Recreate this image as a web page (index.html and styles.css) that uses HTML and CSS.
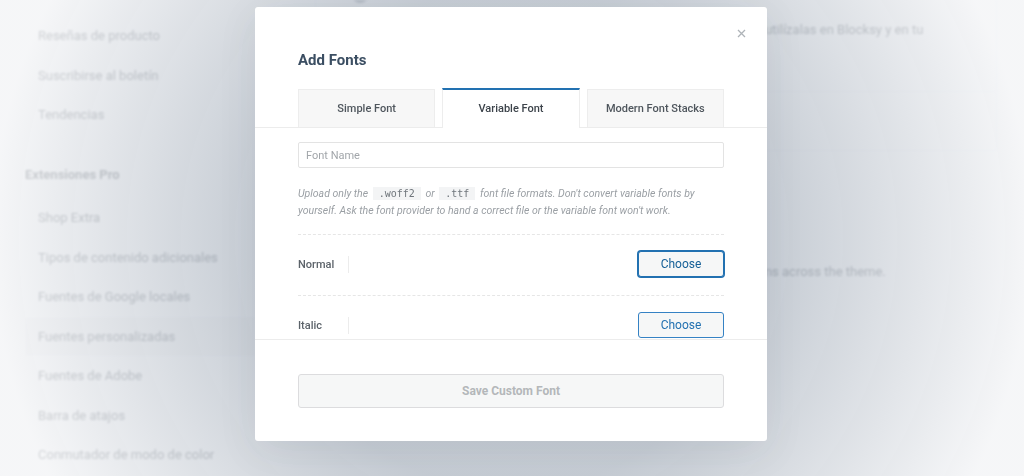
FILE: index.html
```html
<!DOCTYPE html>
<html lang="es">
<head>
  <meta charset="UTF-8">
  <meta name="viewport" content="width=device-width, initial-scale=1.0">
  <title>Fuentes personalizadas</title>
  <link rel="stylesheet" href="styles.css">
</head>
<body>
  <div class="admin">
    <aside class="sidebar">
      <ul class="menu">
        <li>Reseñas de producto</li>
        <li>Suscribirse al boletín</li>
        <li>Tendencias</li>
      </ul>
      <h3 class="menu-title">Extensiones Pro</h3>
      <ul class="menu">
        <li>Shop Extra</li>
        <li>Tipos de contenido adicionales</li>
        <li>Fuentes de Google locales</li>
        <li class="current">Fuentes personalizadas</li>
        <li>Fuentes de Adobe</li>
        <li>Barra de atajos</li>
        <li>Conmutador de modo de color</li>
      </ul>
    </aside>

    <main class="content">
      <div class="ext-card">
        <div class="ext-row">
          <span class="ext-icon"></span>
          <p>Sube tus propias fuentes personalizadas desde tu propio equipo y utilízalas en Blocksy y en tu</p>
        </div>
        <div class="ext-row small"></div>
      </div>
      <p class="content-note">Once uploaded, the fonts are available in all of the typography options across the theme.</p>
    </main>
  </div>

  <div class="overlay"></div>

  <div class="modal">
    <button class="modal-close" type="button">
      <svg width="9" height="9" viewBox="0 0 9 9"><path d="M1 1L8 8M8 1L1 8" stroke="#aeb3b8" stroke-width="1.3"/></svg>
    </button>

    <div class="modal-head">
      <h2>Add Fonts</h2>
      <div class="tabs">
        <div class="tab">Simple Font</div>
        <div class="tab active">Variable Font</div>
        <div class="tab">Modern Font Stacks</div>
      </div>
    </div>

    <div class="modal-body">
      <input class="font-name" type="text" placeholder="Font Name">

      <p class="help">Upload only the <code>.woff2</code> or <code>.ttf</code> font file formats. Don't convert variable fonts by yourself. Ask the font provider to hand a correct file or the variable font won't work.</p>

      <div class="variation">
        <span class="variation-label">Normal</span>
        <button class="choose focused" type="button">Choose</button>
      </div>
      <div class="variation">
        <span class="variation-label">Italic</span>
        <button class="choose" type="button">Choose</button>
      </div>
    </div>

    <div class="modal-foot">
      <button class="save" type="button">Save Custom Font</button>
    </div>
  </div>
</body>
</html>
```

FILE: styles.css
```css
* {
  box-sizing: border-box;
}

body {
  margin: 0;
  height: 476px;
  overflow: hidden;
  background-color: #f0f0f1;
  font-family: Roboto, "Liberation Sans", sans-serif;
}

/* blurred admin page behind the modal */
.admin {
  display: flex;
  height: 100%;
  color: #3c434a;
  filter: blur(0.8px);
}

.sidebar {
  width: 255px;
  flex-shrink: 0;
  padding: 16px 0 0 25px;
}

.menu {
  list-style: none;
  margin: 0;
  padding: 0;
}

.menu li {
  height: 39.5px;
  line-height: 39.5px;
  padding-left: 13px;
  font-size: 13px;
}

.menu li.current {
  background-color: rgba(0, 0, 0, 0.04);
}

.menu-title {
  margin: 20px 0 4px;
  height: 39.5px;
  line-height: 39.5px;
  font-size: 13px;
  font-weight: 700;
}

.content {
  flex: 1;
  padding-left: 60px;
}

.ext-card {
  width: 682px;
  border: 1px solid #e2e4e7;
  border-top: 0;
}

.ext-row {
  height: 91px;
  padding: 0 35px;
  overflow: hidden;
}

.ext-row.small {
  height: 59px;
  border-top: 1px solid #e2e4e7;
}

.ext-icon {
  display: block;
  width: 18px;
  height: 18px;
  margin-top: -15px;
  border-radius: 50%;
  background-color: #7d848b;
}

.ext-row p {
  margin: 17px 0 0 31px;
  font-size: 13px;
  line-height: 20px;
  white-space: nowrap;
}

.content-note {
  margin: 111px 0 0 63px;
  font-size: 13px;
  line-height: 20px;
  white-space: nowrap;
}

.overlay {
  position: fixed;
  top: 0;
  left: 0;
  right: 0;
  bottom: 0;
  background: radial-gradient(circle at 50% 50%, rgba(185, 193, 203, 0.78) 0, rgba(185, 193, 203, 0.78) 250px, rgba(247, 248, 250, 0.8) 520px);
}

/* modal */
.modal {
  position: fixed;
  top: 7px;
  left: 255px;
  width: 512px;
  height: 434px;
  display: flex;
  flex-direction: column;
  background-color: #fff;
  border-radius: 3px;
  box-shadow: 0 10px 40px rgba(40, 50, 60, 0.08);
}

.modal-close {
  position: absolute;
  top: 19px;
  right: 19px;
  width: 14px;
  height: 14px;
  padding: 0;
  border: 0;
  background: none;
  display: flex;
  align-items: center;
  justify-content: center;
  cursor: pointer;
}

.modal-head {
  padding-top: 43px;
  border-bottom: 1px solid #ececec;
}

.modal-head h2 {
  margin: 0 43px 19px;
  font-size: 15px;
  line-height: 20px;
  font-weight: 700;
  color: #3b4e62;
}

.tabs {
  display: flex;
  gap: 7px;
  padding: 0 43px;
  margin-bottom: -1px;
}

.tab {
  flex: 1;
  height: 38px;
  line-height: 37px;
  text-align: center;
  font-size: 11px;
  font-weight: 500;
  color: #4f565d;
  background-color: #f7f7f7;
  border: 1px solid #ededed;
  border-bottom: 0;
}

.tab.active {
  height: 40px;
  margin-top: -1px;
  line-height: 37px;
  background-color: #fff;
  border-top: 2px solid #2271b1;
  color: #3c434a;
}

.modal-body {
  flex: 1;
  overflow: hidden;
  padding: 14px 43px 0;
}

.font-name {
  display: block;
  width: 100%;
  height: 26px;
  padding: 0 7px;
  border: 1px solid #e3e3e3;
  border-radius: 2px;
  font-family: Roboto, "Liberation Sans", sans-serif;
  font-size: 11px;
}

.font-name::placeholder {
  color: #a2a6aa;
}

.help {
  margin: 17px 0 0;
  padding-bottom: 15px;
  font-size: 10.5px;
  line-height: 17px;
  font-style: italic;
  color: #9a9fa4;
  border-bottom: 1px dashed #e6e6e6;
}

.help code {
  margin: 0 2px;
  padding: 1px 6px;
  font-style: normal;
  font-family: "DejaVu Sans Mono", "Liberation Mono", monospace;
  font-size: 10px;
  color: #6f757b;
  background-color: #f3f4f5;
}

.variation {
  display: flex;
  align-items: center;
  justify-content: space-between;
  height: 61px;
  padding-bottom: 2px;
  border-bottom: 1px dashed #e6e6e6;
}

.variation-label {
  width: 51px;
  height: 17px;
  line-height: 17px;
  font-size: 11px;
  font-weight: 500;
  color: #5c636a;
  border-right: 1px solid #ececec;
}

.choose {
  width: 86px;
  height: 26px;
  border: 1px solid #3582c4;
  border-radius: 3px;
  background-color: #f6f7f7;
  font-family: Roboto, "Liberation Sans", sans-serif;
  font-size: 12px;
  color: #2271b1;
  cursor: pointer;
}

.choose.focused {
  border-color: #2271b1;
  box-shadow: 0 0 0 1px #2271b1;
  color: #135e96;
}

.modal-foot {
  height: 102px;
  padding: 34px 43px 0;
  border-top: 1px solid #ececec;
}

.save {
  width: 100%;
  height: 34px;
  border: 1px solid #dcdcde;
  border-radius: 3px;
  background-color: #f6f7f7;
  font-family: Roboto, "Liberation Sans", sans-serif;
  font-size: 12px;
  font-weight: 700;
  color: #b4b7ba;
}
```
